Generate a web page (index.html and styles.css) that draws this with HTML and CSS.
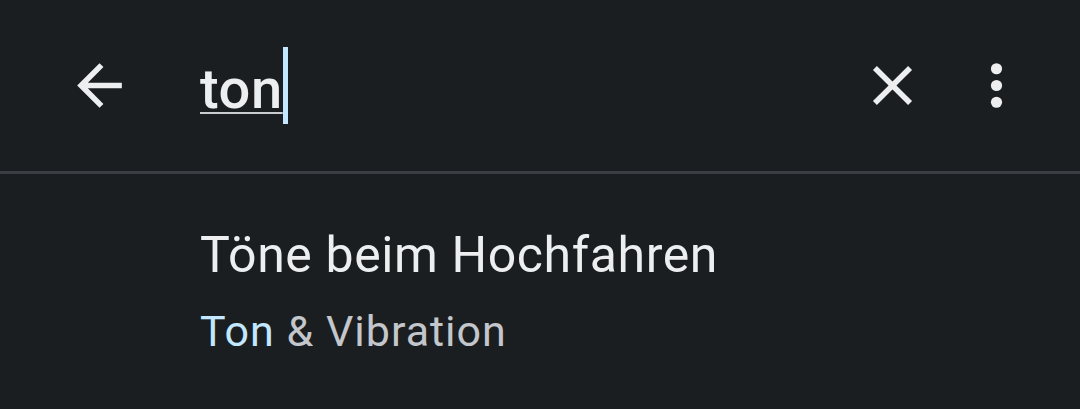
FILE: index.html
```html
<!DOCTYPE html>
<html lang="de">
<head>
  <meta charset="UTF-8">
  <meta name="viewport" content="width=device-width, initial-scale=1.0">
  <title>Einstellungen durchsuchen</title>
  <link rel="stylesheet" href="styles.css">
</head>
<body>
  <header class="search-bar">
    <button class="icon-btn" aria-label="Zurück">
      <svg viewBox="0 0 24 24"><path d="M20 11H7.83l5.59-5.59L12 4l-8 8 8 8 1.41-1.41L7.83 13H20v-2z"/></svg>
    </button>
    <div class="search-field">
      <span class="search-text">ton</span><span class="search-cursor"></span>
    </div>
    <button class="icon-btn" aria-label="Löschen">
      <svg viewBox="0 0 24 24"><path d="M19 6.41L17.59 5 12 10.59 6.41 5 5 6.41 10.59 12 5 17.59 6.41 19 12 13.41 17.59 19 19 17.59 13.41 12z"/></svg>
    </button>
    <button class="icon-btn icon-more" aria-label="Mehr">
      <svg viewBox="0 0 24 24"><circle cx="12" cy="6" r="2"/><circle cx="12" cy="12" r="2"/><circle cx="12" cy="18" r="2"/></svg>
    </button>
  </header>
  <main class="results">
    <div class="result-item">
      <p class="result-title">Töne beim Hochfahren</p>
      <p class="result-path"><span class="match">Ton</span> &amp; Vibration</p>
    </div>
  </main>
</body>
</html>
```

FILE: styles.css
```css
:root {
  --bg-color: #1b1e21;
  --text-color: #eceef0;
  --sub-color: #c3c6ca;
  --accent-color: #c2e7ff;
  --divider-color: #3b3f43;
}

html {
  box-sizing: border-box;
  font-family: Roboto, "Noto Sans", sans-serif;
}

*,
*::before,
*::after {
  box-sizing: inherit;
}

body {
  margin: 0;
  background-color: var(--bg-color);
  color: var(--text-color);
  height: 409px;
  overflow: hidden;
}

.search-bar {
  display: flex;
  align-items: center;
  height: 174px;
  padding-left: 66px;
  padding-right: 50px;
  border-bottom: 3px solid var(--divider-color);
}

.icon-btn {
  width: 67px;
  height: 67px;
  padding: 0;
  border: none;
  background: none;
  color: var(--text-color);
  flex-shrink: 0;
}

.icon-btn svg {
  display: block;
  width: 100%;
  height: 100%;
  fill: currentColor;
}

.icon-more {
  margin-left: 37px;
}

.search-field {
  flex: 1;
  display: flex;
  align-items: center;
  margin-left: 67px;
}

.search-text {
  font-size: 56px;
  font-weight: 500;
  letter-spacing: 0.6px;
  line-height: 64px;
  padding-top: 7px;
  text-decoration: underline;
  text-decoration-color: #c9ccd0;
  text-decoration-thickness: 2px;
  text-underline-offset: 4px;
}

.search-cursor {
  width: 5px;
  height: 77px;
  background-color: var(--accent-color);
}

.results {
  padding-left: 200px;
}

.result-item {
  padding-top: 53px;
}

.result-title,
.result-path {
  margin: 0;
}

.result-title {
  font-size: 50px;
  letter-spacing: 0.6px;
  line-height: 56px;
}

.result-path {
  margin-top: 23px;
  font-size: 43px;
  letter-spacing: 1px;
  line-height: 50px;
  color: var(--sub-color);
}

.match {
  color: var(--accent-color);
}
```
